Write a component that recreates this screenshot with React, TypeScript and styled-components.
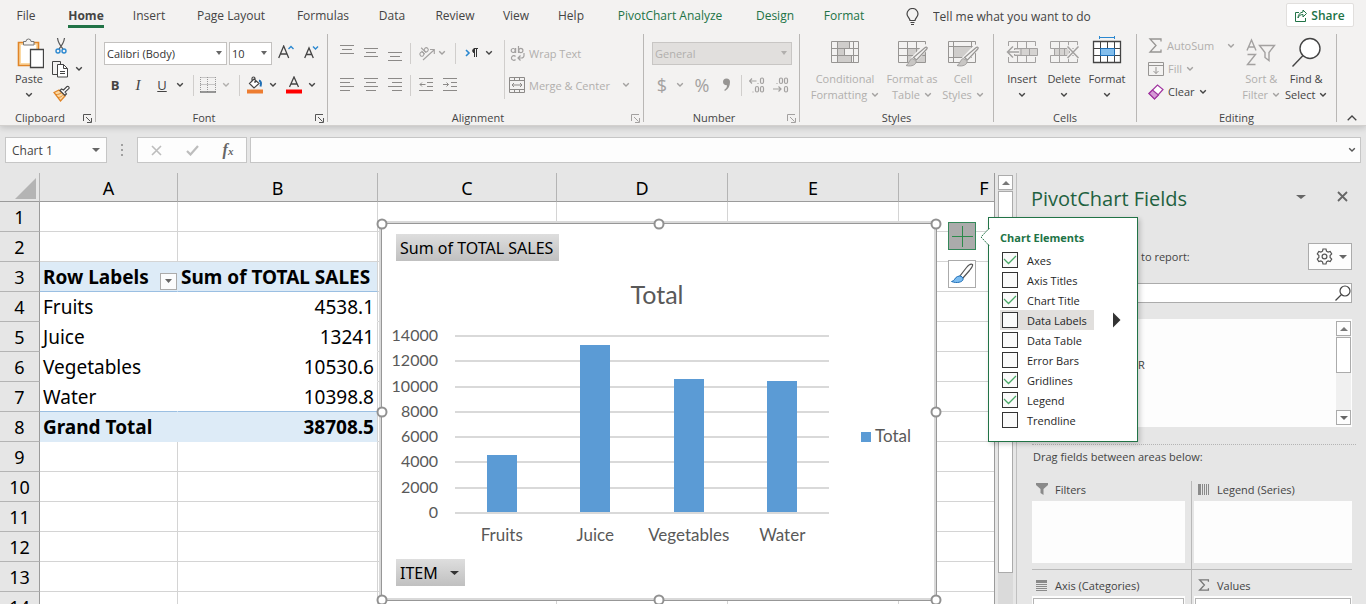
import React from 'react';
import styled, { createGlobalStyle, css } from 'styled-components';

const UI_FONT = '"Open Sans", "Noto Sans", sans-serif';
const CELL_FONT = '"Noto Sans", "Open Sans", sans-serif';
const CHART_FONT = 'Lato, "Open Sans", sans-serif';

const INK = '#444444';
const MUTED = '#b1afad';
const GREEN = '#217346';

const GlobalStyle = createGlobalStyle`
  *, *::before, *::after { box-sizing: border-box; }
  body { margin: 0; background: #e6e6e6; font-family: ${UI_FONT}; font-size: 11px; color: ${INK}; }
  button, input, select { font: inherit; color: inherit; margin: 0; padding: 0; border: 0; border-radius: 0; background: none; outline: 0; }
  button { cursor: pointer; white-space: nowrap; }
  svg { display: block; flex: none; }
`;

const Window = styled.div`
  display: flex;
  flex-direction: column;
  height: 100vh;
  overflow: hidden;
`;

/* ---------- Ribbon ---------- */

const Ribbon = styled.header`
  position: relative;
  z-index: 2;
  flex: none;
  background: #f3f2f1;
  border-bottom: 1px solid #d2d0ce;
  box-shadow: 0 2px 6px rgba(0, 0, 0, 0.16);
`;

const TabBar = styled.nav`
  display: flex;
  height: 34px;
`;

const Tab = styled.button<{ $w: number; $active?: boolean; $context?: boolean }>`
  display: flex;
  justify-content: center;
  width: ${p => p.$w}px;
  height: 32px;
  font-size: 12px;
  line-height: 32px;
  color: ${p => (p.$context ? GREEN : INK)};
  font-weight: ${p => (p.$active ? 700 : 400)};
  span {
    height: 28px;
    border-bottom: 3px solid ${p => (p.$active ? GREEN : 'transparent')};
  }
`;

const TellMe = styled.label`
  display: flex;
  flex: 1;
  align-items: center;
  gap: 14px;
  height: 32px;
  padding-left: 26px;
  input { flex: 1; font-size: 12px; }
  input::placeholder { color: ${INK}; opacity: 1; }
`;

const ShareButton = styled.button`
  display: flex;
  align-items: center;
  justify-content: center;
  gap: 4px;
  width: 68px;
  height: 24px;
  margin: 3px 12px 0 0;
  border: 1px solid #e1dfdd;
  border-radius: 2px;
  background: #fff;
  color: ${GREEN};
  font-size: 12px;
  font-weight: 600;
`;

const Groups = styled.div`
  display: flex;
  height: 91px;
`;

const Group = styled.section<{ $w: number }>`
  display: flex;
  flex-direction: column;
  width: ${p => p.$w}px;
`;

const GroupDivider = styled.span`
  width: 1px;
  height: 88px;
  background: #b9b7b5;
`;

const GroupBody = styled.div<{ $pad: number }>`
  display: flex;
  flex: 1;
  padding-left: ${p => p.$pad}px;
`;

const GroupFooter = styled.div`
  display: flex;
  height: 14px;
  line-height: 14px;
  text-align: center;
  span { flex: 1; }
  button { display: flex; align-items: center; justify-content: center; width: 15px; }
`;

const Stack = styled.div<{ $top?: number; $right?: number }>`
  display: flex;
  flex-direction: column;
  padding: ${p => p.$top ?? 3}px ${p => p.$right ?? 0}px 0 0;
`;

const ToolRow = styled.div<{ $h?: number; $gap?: number }>`
  display: flex;
  align-items: center;
  height: ${p => p.$h ?? 32}px;
  gap: ${p => p.$gap ?? 0}px;
`;

const Tool = styled.button<{ $w: number; $size?: number; $off?: boolean }>`
  display: flex;
  align-items: center;
  justify-content: center;
  width: ${p => p.$w}px;
  height: 24px;
  font-size: ${p => p.$size ?? 13}px;
  color: ${p => (p.$off ? '#a3a1a0' : INK)};
`;

const ItalicLetter = styled.i`
  font-family: 'Liberation Serif', serif;
  font-size: 15px;
`;

const ToolDivider = styled.span<{ $w: number; $h?: number; $top?: number }>`
  display: flex;
  flex: none;
  justify-content: center;
  width: ${p => p.$w}px;
  height: ${p => p.$h ?? 21}px;
  margin-top: ${p => p.$top ?? 0}px;
  &::before { content: ''; width: 1px; background: #d0cecc; }
`;

const TextTool = styled.button<{ $off?: boolean }>`
  display: flex;
  align-items: center;
  gap: 4px;
  height: 23px;
  color: ${p => (p.$off ? MUTED : INK)};
`;

const BigTool = styled.button<{ $w: number; $off?: boolean }>`
  display: flex;
  flex-direction: column;
  align-items: center;
  width: ${p => p.$w}px;
  height: 71px;
  padding-top: 3px;
  line-height: 16px;
  color: ${p => (p.$off ? MUTED : INK)};
`;

const LabelLine = styled.span`
  display: flex;
  align-items: center;
  gap: 4px;
  height: 16px;
`;

const Combo = styled.label<{ $w: number; $off?: boolean }>`
  display: flex;
  align-items: center;
  width: ${p => p.$w}px;
  height: 23px;
  padding: 0 4px 0 2px;
  border: 1px solid ${p => (p.$off ? '#c8c6c4' : '#c3c1bf')};
  background: ${p => (p.$off ? '#e1dfdd' : '#fff')};
  color: ${p => (p.$off ? MUTED : '#333')};
  select { flex: 1; min-width: 0; appearance: none; opacity: 1; }
`;

const CollapseButton = styled.button`
  align-self: flex-end;
  margin-left: auto;
  width: 28px;
  height: 14px;
  svg { margin: 0 auto; }
`;

/* ---------- Formula bar ---------- */

const FormulaBar = styled.div`
  display: flex;
  flex: none;
  align-items: center;
  height: 47px;
  padding: 1px 5px 0;
`;

const BarBox = styled.div<{ $w?: number }>`
  display: flex;
  align-items: center;
  flex: ${p => (p.$w ? 'none' : 1)};
  width: ${p => (p.$w ? p.$w + 'px' : 'auto')};
  height: 26px;
  border: 1px solid #c6c6c6;
  background: #fdfdfd;
  input { flex: 1; min-width: 0; padding-left: 6px; font-size: 12px; }
`;

const BarButton = styled.button<{ $w: number }>`
  display: flex;
  justify-content: center;
  align-items: center;
  width: ${p => p.$w}px;
  height: 24px;
`;

const Grip = styled.span`
  display: flex;
  justify-content: center;
  width: 30px;
`;

const Spacer = styled.span`
  width: 3px;
`;

const FxLabel = styled.i`
  font-family: 'Liberation Serif', serif;
  font-size: 16px;
  font-weight: 700;
  color: #666;
  small { font-size: 11px; }
`;

/* ---------- Worksheet ---------- */

const Workspace = styled.main`
  display: flex;
  flex: 1;
  min-height: 0;
  position: relative;
`;

const SheetArea = styled.div`
  flex: 1;
  min-width: 0;
  position: relative;
  overflow: hidden;
  border-right: 1px solid #9b9b9b;
`;

const Grid = styled.table`
  width: 1070px;
  table-layout: fixed;
  border-collapse: separate;
  border-spacing: 0;
  background: #fff;
  font-family: ${CELL_FONT};
  font-size: 19px;
  line-height: 28px;
  color: #000;
`;

const ColHead = styled.th`
  height: 29px;
  padding: 2px 0 0;
  border-right: 1px solid #b4b4b4;
  border-bottom: 1px solid #9b9b9b;
  background: #e6e6e6;
  font-size: 18px;
  font-weight: 400;
  line-height: 26px;
`;

const Corner = styled(ColHead)`
  padding: 3px 3px 0 0;
  svg { margin-left: auto; }
`;

const RowHead = styled.th`
  height: 30px;
  padding: 0;
  border-right: 1px solid #9b9b9b;
  border-bottom: 1px solid #b4b4b4;
  background: #e6e6e6;
  font-size: 18px;
  font-weight: 400;
`;

const Cell = styled.td<{ $kind?: 'head' | 'body' | 'last' | 'total'; $number?: boolean; $inner?: boolean }>`
  height: 30px;
  padding: 0 3px;
  border-right: 1px solid #d4d4d4;
  border-bottom: 1px solid #d4d4d4;
  text-align: ${p => (p.$number ? 'right' : 'left')};
  white-space: nowrap;
  ${p => p.$inner && css`border-right-color: transparent;`}
  ${p => p.$kind === 'body' && css`border-bottom-color: transparent;`}
  ${p => p.$kind === 'last' && css`border-bottom-color: #9bbfe2;`}
  ${p => (p.$kind === 'head' || p.$kind === 'total') && css`background: #ddebf7; font-weight: 700;`}
  ${p => p.$kind === 'head' && css`border-bottom-color: #9bbfe2;`}
  ${p => p.$kind === 'total' && css`border-bottom-color: #ddebf7;`}
`;

const HeadCell = styled.div`
  display: flex;
  align-items: center;
  justify-content: space-between;
  margin-right: -3px;
`;

const FilterButton = styled.button`
  display: flex;
  align-items: center;
  justify-content: center;
  width: 17px;
  height: 17px;
  margin-top: 9px;
  border: 1px solid #ababab;
  background: #fbfcfd;
`;

/* ---------- Chart object placed on the sheet ---------- */

const ChartFrame = styled.figure`
  position: absolute;
  left: 381px;
  top: 50px;
  width: 556px;
  height: 378px;
  margin: 0;
  padding: 10px 14px;
  border: 1px solid #979797;
  background: #fff;
  box-shadow: -2px -2px 0 #d9d9d9, inset -2px -2px 0 #d9d9d9;
`;

const PlotSvg = styled.svg`
  margin: 0 -14px;
  font-family: ${CHART_FONT};
  font-size: 16px;
  fill: #595959;
`;

const FieldButton = styled.button`
  display: flex;
  align-items: center;
  gap: 12px;
  height: 27px;
  padding: 0 6px 0 4px;
  background: linear-gradient(#dedede, #c0c0c0);
  font-family: ${CELL_FONT};
  font-size: 16px;
  color: #000;
`;

const Handle = styled.span<{ $x: string; $y: string }>`
  position: absolute;
  left: ${p => p.$x};
  top: ${p => p.$y};
  width: 11px;
  height: 11px;
  transform: translate(-50%, -50%);
  border: 2px solid #919191;
  border-radius: 50%;
  background: #fff;
`;

const ChartTools = styled.div`
  position: absolute;
  left: 948px;
  top: 49px;
  display: flex;
  flex-direction: column;
  gap: 10px;
`;

const ChartToolButton = styled.button<{ $on?: boolean }>`
  display: flex;
  align-items: center;
  justify-content: center;
  width: 28px;
  height: 28px;
  border: 1px solid ${p => (p.$on ? '#35885a' : '#ababab')};
  background: ${p => (p.$on ? '#ababab' : '#fff')};
`;

const Flyout = styled.fieldset`
  position: absolute;
  z-index: 3;
  left: 988px;
  top: 44px;
  width: 150px;
  margin: 0;
  padding: 10px 0 11px 11px;
  border: 1px solid ${GREEN};
  background: #fff;
  box-shadow: 2px 2px 5px rgba(0, 0, 0, 0.2);
  color: #262626;
`;

const FlyoutTitle = styled.h2`
  margin: 0 0 2px;
  font-size: 11px;
  line-height: 20px;
  font-weight: 700;
  color: ${GREEN};
`;

const Notch = styled.svg`
  position: absolute;
  left: -9px;
  top: 9px;
`;

const OptionRow = styled.div`
  display: flex;
  align-items: center;
  justify-content: space-between;
  height: 20px;
  padding-right: 16px;
`;

const Option = styled.label<{ $hot?: boolean }>`
  display: flex;
  align-items: center;
  gap: 9px;
  height: 20px;
  padding: 0 7px 0 2px;
  background: ${p => (p.$hot ? '#e1dfdd' : 'transparent')};
`;

const Box = styled.span`
  display: grid;
  place-items: center;
  width: 16px;
  height: 16px;
  > * { grid-area: 1 / 1; }
  input {
    appearance: none;
    width: 16px;
    height: 16px;
    border: 1px solid #333;
    background: #fafafa;
  }
  svg { z-index: 1; pointer-events: none; visibility: hidden; }
  input:checked + svg { visibility: visible; }
`;

/* ---------- Scroll bars ---------- */

const ScrollRail = styled.div<{ $sheet?: boolean }>`
  display: flex;
  flex: none;
  flex-direction: column;
  width: 15px;
  margin: ${p => (p.$sheet ? '2px 3px 0' : '0')};
  background: ${p => (p.$sheet ? '#dadada' : '#f0f0f0')};
`;

const ScrollArrow = styled.button`
  display: flex;
  align-items: center;
  justify-content: center;
  height: 15px;
  border: 1px solid #ababab;
  background: #fdfdfd;
`;

const ScrollThumb = styled.span<{ $h: number }>`
  height: ${p => p.$h}px;
  margin-top: 1px;
  border: 1px solid #ababab;
  background: #fff;
`;

const ScrollGap = styled.span`
  flex: 1;
`;

/* ---------- Task pane ---------- */

const Pane = styled.aside`
  flex: none;
  width: 350px;
  border-left: 1px solid #c0c0c0;
  padding: 0 14px 0 15px;
`;

const PaneHead = styled.div`
  display: flex;
  align-items: center;
  height: 52px;
  h1 { flex: 1; margin: 0 0 0 -1px; font-size: 20px; font-weight: 400; line-height: 28px; color: #1e6140; }
`;

const PaneIcon = styled.button<{ $w: number }>`
  display: flex;
  justify-content: center;
  align-items: center;
  width: ${p => p.$w}px;
  height: 18px;
  margin-bottom: 5px;
`;

const PaneRow = styled.div`
  display: flex;
  align-items: center;
  justify-content: space-between;
  height: 27px;
  margin-top: 18px;
  padding-left: 109px;
`;

const GearButton = styled.button`
  display: flex;
  align-items: center;
  justify-content: center;
  gap: 6px;
  width: 44px;
  height: 27px;
  padding-left: 3px;
  border: 1px solid #ababab;
  background: #fdfdfd;
`;

const SearchBox = styled.label`
  display: flex;
  align-items: center;
  height: 20px;
  margin-top: 13px;
  border: 1px solid #ababab;
  background: #fff;
  input { flex: 1; min-width: 0; }
`;

const FieldList = styled.div`
  display: flex;
  height: 108px;
  margin-top: 16px;
  padding: 2px 1px 2px 0;
  background: #fdfdfd;
  ul { flex: 1; margin: 0; padding: 33px 0 0 106px; list-style: none; line-height: 22px; }
`;

const DragHint = styled.p`
  margin: 17px -4px 0 0;
  padding: 1px 0 0 1px;
  border-top: 1px dotted #b4b4b4;
  line-height: 22px;
`;

const Areas = styled.div`
  display: grid;
  grid-template-columns: 1fr 160px;
  margin-top: 13px;
`;

const Area = styled.section<{ $left?: boolean; $top?: boolean }>`
  padding-right: ${p => (p.$left ? 6 : 0)}px;
  padding-left: ${p => (p.$left ? 0 : 2)}px;
  padding-bottom: 6px;
  border-right: ${p => (p.$left ? '1px solid #b9b9b9' : '0')};
  border-bottom: ${p => (p.$top ? '1px solid #b9b9b9' : '0')};
  h3 {
    display: flex;
    align-items: center;
    gap: 7px;
    height: ${p => (p.$top ? 20 : 26)}px;
    margin: 0;
    padding: 0 0 ${p => (p.$top ? 4 : 0)}px 4px;
    ${p => !p.$top && css`padding-top: 4px;`}
    font-size: 11px;
    font-weight: 400;
  }
`;

const DropZone = styled.div`
  height: 62px;
  padding: 2px 1px;
  background: #fdfdfd;
`;

const FieldPill = styled.button`
  display: block;
  width: 100%;
  height: 20px;
  padding: 0 6px;
  border: 1px solid #b4b4b4;
  background: #fff;
  text-align: left;
`;

/* ---------- Icons ---------- */

const Chevron = ({ c = INK }: { c?: string }) => (
  <svg width="8" height="6" viewBox="0 0 8 6" fill="none" stroke={c} strokeWidth="1.4"><path d="M1.2 1.2 4 4l2.8-2.8" /></svg>
);
const Triangle = ({ c = '#666', w = 7 }: { c?: string; w?: number }) => (
  <svg width={w} height="4" viewBox="0 0 8 4" preserveAspectRatio="none" fill={c}><path d="M0 0h8L4 4z" /></svg>
);
const TriangleUp = () => <svg width="8" height="4" viewBox="0 0 8 4" fill="#777"><path d="M0 4h8L4 0z" /></svg>;

const PasteIcon = () => (
  <svg width="30" height="34" viewBox="0 0 30 34" fill="none">
    <path d="M4.500 5.500h20v23h-20z" fill="#fbd9a4" stroke="#e08528" strokeWidth="1.600" />
    <path d="M7 8h15v18H7z" fill="#fff" />
    <path d="M9.500 8V4.500h2.500a2.500 2.500 0 0 1 5 0h3V8z" fill="#f3f2f1" stroke="#777" />
    <path d="M16.500 12.500h13v18h-13z" fill="#fff" stroke="#444" strokeWidth="1.300" />
  </svg>
);
const CutIcon = () => (
  <svg width="16" height="18" viewBox="0 0 16 18" fill="none" stroke="#555" strokeWidth="1.200">
    <path d="M4.500 1c.5 4 3 8 5.500 11M11.500 1c-.5 4-3 8-5.500 11" />
    <g stroke="#2b88d0" strokeWidth="1.400"><circle cx="5" cy="14" r="2" /><circle cx="11" cy="14" r="2" /></g>
  </svg>
);
const CopyIcon = () => (
  <svg width="17" height="17" viewBox="0 0 17 17" stroke="#444" fill="#fff">
    <path d="M6 13.500H.5V.500h8V4" fill="none" /><path d="M5.500 3.500h6l4 4v8.500h-10z" /><path d="M11.500 3.500v4h4M8 10.500h5M8 12.500h5" fill="none" />
  </svg>
);
const PainterIcon = () => (
  <svg width="17" height="17" viewBox="0 0 17 17" fill="none">
    <path d="M1 7.500 6 5l6 6-4.500 5z" fill="#fbd9a4" stroke="#e08528" strokeWidth="1.300" />
    <path d="M3 9.500c2 0 4-.5 5-1.500M5 12.500c2 0 3.500-1 4.500-2" stroke="#e08528" />
    <path d="m7 5.500 5 5 1.500-1.500-1.500-2 4-3.500a1.500 1.500 0 0 0-2-2L10.500 5 8.500 4z" fill="#fff" stroke="#444" strokeWidth="1.100" />
  </svg>
);
const Launcher = ({ c = '#777' }: { c?: string }) => (
  <svg width="9" height="9" viewBox="0 0 9 9" fill="none" stroke={c}><path d="M.5 7V.500H8M3 3l4.500 4.500M8.500 4v4.500H4" /></svg>
);
const BordersIcon = () => (
  <svg width="16" height="16" viewBox="0 0 16 16" fill="none" stroke="#9a9a9a" strokeDasharray="1 1"><path d="M.5.500h15M.5 7.500h15M.5 0v15M7.500 0v15M15.500 0v15" /><path d="M0 15h16" stroke="#777" strokeWidth="1.500" strokeDasharray="none" /></svg>
);
const BucketIcon = () => (
  <svg width="16" height="18" viewBox="0 0 16 18" fill="none">
    <path d="m7 3 5 4.500-5 4.500-4.500-4.500zM5 5V2.500a1.500 1.500 0 0 1 3 0V7" stroke="#444" strokeWidth="1.200" fill="#fff" />
    <path d="M12 4.500c2 .5 2.500 3 1.500 6" stroke="#1f6fb5" strokeWidth="2" />
    <path d="M0 13.500h16v4H0z" fill="#ed7d31" />
  </svg>
);
const FontColorIcon = () => (
  <svg width="16" height="18" viewBox="0 0 16 18" fill="none"><path d="M3.500 11 8 1l4.500 10M5 8h6" stroke="#444" strokeWidth="1.300" /><path d="M0 13.500h16v4H0z" fill="#f00" /></svg>
);
const FontSizeIcon = ({ up }: { up?: boolean }) => (
  <svg width="17" height="16" viewBox="0 0 17 16" fill="none">
    <path d={up ? 'M.7 13 5.700 1l5 12M2.300 9h6.800' : 'M1.700 13 6 3l4.300 10M3 9.500h6'} stroke="#444" strokeWidth="1.300" />
    <path d={up ? 'm10.500 4 2.500-2.500L15.500 4' : 'm10 1.500 2.500 2.500L15 1.500'} stroke="#2b88d0" strokeWidth="1.400" />
  </svg>
);
const Lines = ({ rows }: { rows: number[][] }) => (
  <svg width="14" height="18" viewBox="0 0 14 18" stroke="#8c8a88">{rows.map(([x, y, w]) => <path key={y} d={`M${x} ${y}.500h${w}`} />)}</svg>
);
const OrientIcon = () => (
  <svg width="17" height="17" viewBox="0 0 17 17" fill="none" stroke="#a3a1a0" strokeWidth="1.100">
    <path d="M5 15 16 5M12 4.500h4.300V9" />
    <g transform="rotate(-45 6 7)"><circle cx="3" cy="7" r="2" /><path d="M5 4.500V9M7 2v7" /><circle cx="9.200" cy="7" r="2" /></g>
  </svg>
);
const PilcrowIcon = () => (
  <svg width="14" height="12" viewBox="0 0 14 12" fill="none"><path d="m1 3 3 3-3 3" stroke="#2b88d0" strokeWidth="1.600" /><path d="M9 1.500h4M9.500 2v8M11.500 2v8" stroke="#333" /><path d="M9.500 1.500a2.300 2.300 0 0 0 0 4.500z" fill="#333" stroke="#333" /></svg>
);
const IndentIcon = ({ out }: { out?: boolean }) => (
  <svg width="14" height="14" viewBox="0 0 14 14" fill="none" stroke="#8c8a88"><path d="M0 .500h14M8 4.500h6M8 8.500h6M0 12.500h14" /><path d={out ? 'M6.500 6.500H1M3 4.500l-2 2 2 2' : 'M0 6.500h5.500M3.500 4.500l2 2-2 2'} /></svg>
);
const WrapIcon = () => (
  <svg width="16" height="17" viewBox="0 0 16 17" fill="none" stroke="#a3a1a0" strokeWidth="1.200">
    <circle cx="4.200" cy="5.500" r="2" /><path d="M6.600 3v5M9.500 1v7" /><circle cx="11.800" cy="5.500" r="2.100" />
    <path d="M6.500 11.500a2.300 2.300 0 1 0 0 3M15 8v2.500a2.500 2.500 0 0 1-2.500 2.500H9M11.500 10.500 9 13l2.500 2.500" />
  </svg>
);
const MergeIcon = () => (
  <svg width="16" height="16" viewBox="0 0 16 16" fill="none" stroke="#8c8a88"><path d="M.5.500h15v15H.5zM.5 3.500h15M.5 12.500h15M5.500.500v3M10.500.500v3M5.500 12.500v3M10.500 12.500v3M3 8h10M5 6 3 8l2 2M11 6l2 2-2 2" /></svg>
);
const DecimalIcon = ({ less }: { less?: boolean }) => (
  <svg width="16" height="18" viewBox="0 0 16 18" fill="none" stroke="#a3a1a0" strokeWidth="1.200">
    {less ? <path d="M0 13h8M5.500 10.500 8 13l-2.500 2.500" /> : <path d="M7.500 5H.7M3 2.500.5 5 3 7.500" />}
    {!less && <path d="M8.500 7.500h1" />}{less && <rect x="6.500" y="2" width="3" height="5.500" rx="1.500" />}
    <rect x="11.500" y="2" width="3" height="5.500" rx="1.500" /><rect x="11.500" y="10.500" width="3" height="5.500" rx="1.500" />
    {!less && <rect x="6.500" y="10.500" width="3" height="5.500" rx="1.500" />}<path d={less ? 'M3.500 7.500h1' : 'M3.500 16h1'} />
  </svg>
);
const BrushOver = () => (
  <g><path d="m31.500 11-11 11.500-2-1.500 10-10.500c2-1.800 4-1.500 3 .5z" fill="#f3f2f1" stroke="#f3f2f1" strokeWidth="4" /><path d="m31.800 12-10.300 11-3-2.500L29 11.500c2.500-2 4-1.500 2.800.5z" fill="#f3f2f1" stroke="#979593" strokeWidth="1.200" /><path d="M21 23.500c1 4-4 6.500-10 5 3-1 2.500-5 6-7z" fill="#c8c6c4" stroke="#a3a1a0" /></g>
);
const CondIcon = () => (
  <svg width="32" height="34" viewBox="0 0 32 34" fill="none" stroke="#979593"><path d="M8.500 4.500h12v7h-12zM8.500 11.500h7v7h-7zM8.500 18.500h14v7h-14z" fill="#cfcdcb" /><path d="M2.500 4.500h27v21h-27zM8.500 4.500v21M24.500 4.500v21M2.500 11.500h27M2.500 18.500h27" /></svg>
);
const TableIcon = () => (
  <svg width="34" height="34" viewBox="0 0 34 34" fill="none" stroke="#979593"><path d="M12.500 11.500h9v14h-9zM21.500 11.500h9v14h-9z" fill="#cfcdcb" stroke="none" /><path d="M3.500 4.500h27v21h-27zM12.500 4.500v21M21.500 4.500v21M3.500 11.500h27M3.500 18.500h27" /><BrushOver /></svg>
);
const CellStyleIcon = () => (
  <svg width="34" height="34" viewBox="0 0 34 34" fill="none" stroke="#979593"><path d="M7.500 9.500h18v11h-18z" fill="#cfcdcb" /><path d="M2.500 4.500h27v21h-27zM7.500 4.500v21M25.500 4.500v16M2.500 9.500h27M2.500 20.500h23" /><BrushOver /></svg>
);
const InsertIcon = () => (
  <svg width="34" height="34" viewBox="0 0 34 34" fill="none" stroke="#a3a1a0"><path d="M3.500 9V4.500h27V9M12.500 4.500V12M21.500 4.500V12M3.500 20v5.500h27V20M12.500 19v6.500M21.500 19v6.500" /><path d="M9.500 11.500h23v7h-23zM16 11.500v7M24.500 11.500v7" fill="#d5d3d1" /><path d="M2.500 15h12" stroke="#f3f2f1" strokeWidth="4" /><path d="M14 15H2.500M8 9.500 2.500 15 8 20.500" strokeWidth="1.500" /></svg>
);
const DeleteIcon = () => (
  <svg width="34" height="34" viewBox="0 0 34 34" fill="none" stroke="#a3a1a0"><path d="M3.500 4.500h27V9M3.500 4.500v7h27M12.500 4.500v7M21.500 4.500v7M3.500 18.500h27v7h-27zM12.500 18.500v7M21.500 18.500v7" /><path d="M7.500 11.500h15v7h-15zM12.500 11.500v7M17.500 11.500v7" fill="#d5d3d1" /><path d="m20.500 9 11 12M31.500 9l-11 12" stroke="#f3f2f1" strokeWidth="4" /><path d="m20.500 9.500 11 11.500M31.500 9.500 20.500 21" strokeWidth="1.500" /></svg>
);
const FormatIcon = () => (
  <svg width="34" height="34" viewBox="0 0 34 34" overflow="visible" fill="none" stroke="#444"><path d="M3.500 4.500h27v21h-27z" fill="#fff" strokeWidth="1.300" /><path d="M10.500 4.500v21M24.500 4.500v21M17.500 4.500v21M3.500 11.500h27M3.500 18.500h27" /><path d="M10.500 11.500h14v7h-14z" fill="#83beec" stroke="#1e6fb8" /><path d="M9.500-1v3M24.500-1v3M9.500.500h15" stroke="#2b88d0" /></svg>
);
const SigmaIcon = ({ s = 15, c = '#979593', w = 1.3 }: { s?: number; c?: string; w?: number }) => (
  <svg width={s} height={s} viewBox="0 0 15 15" fill="none" stroke={c} strokeWidth={w}><path d="M13 3.500V1H2l6 6.500L2 14h11v-2.500" /></svg>
);
const FillIcon = () => (
  <svg width="16" height="14" viewBox="0 0 16 14" fill="none" stroke="#979593"><path d="M.5.500h15v13H.5zM.5 3.500h15M8 5v6.500M5.500 9 8 11.500 10.500 9" /></svg>
);
const EraserIcon = () => (
  <svg width="16" height="16" viewBox="0 0 16 16" fill="none" stroke="#a035a0" strokeWidth="1.200"><path d="m1 9.500 8.500-8.500 5.500 4.500L6.500 15z" fill="#fff" /><path d="M1 9.500 4.500 6l6 5-4 4z" fill="#d59ad5" /></svg>
);
const SortIcon = () => (
  <svg width="32" height="34" viewBox="0 0 32 34" fill="none" stroke="#a3a1a0" strokeWidth="1.400"><path d="M2 13.500 6.500 3 11 13.500M3.500 10h6M2.500 17.500h8L2.500 27.500h8" /><path d="M14.500 8.500h15l-5.500 7v8l-4-3v-5z" /></svg>
);
const FindIcon = () => (
  <svg width="32" height="34" viewBox="0 0 32 34" fill="none" stroke="#444" strokeWidth="1.400"><circle cx="20" cy="11.500" r="10" fill="#fff" /><path d="M13 18.500 2.500 29.500" /></svg>
);
const BulbIcon = () => (
  <svg width="13" height="17" viewBox="0 0 13 17" fill="none" stroke="#444" strokeWidth="1.200"><path d="M4 12.500c0-2.500-3-3.500-3-6.500a5.400 5.400 0 0 1 11 0c0 3-3 4-3 6.500zM4.500 14.500h4M5 16.500h3" /></svg>
);
const ShareIcon = () => (
  <svg width="12" height="13" viewBox="0 0 12 13" fill="none" stroke={GREEN}><path d="M4 3.500H.500v9h10V9M8 1l3.500 3.500L8 8V5.500C5.500 5.500 4 6.500 3 9c0-3.500 2-5.500 5-6z" /></svg>
);
const GearIcon = () => (
  <svg width="17" height="17" viewBox="0 0 17 17" fill="none" stroke="#555" strokeWidth="1.200"><circle cx="8.500" cy="8.500" r="2.400" /><path d="M7 1h3l.5 2.200 1.600.9 2.100-.7 1.500 2.600-1.600 1.500v2l1.600 1.500-1.500 2.600-2.100-.7-1.600.9L10 16H7l-.5-2.200-1.600-.9-2.100.7L1.300 11l1.600-1.500v-2L1.300 6l1.500-2.600 2.100.7 1.600-.9z" /></svg>
);
const SearchIcon = () => (
  <svg width="16" height="16" viewBox="0 0 16 16" fill="none" stroke="#444" strokeWidth="1.200"><circle cx="10" cy="6" r="5" /><path d="M6.500 9.500.5 15.500" /></svg>
);
const ChartBrushIcon = () => (
  <svg width="24" height="22" viewBox="0 0 24 22"><path d="M22.500 1.500c-1.500-1-4 .5-6 3L10 13l2.500 2.500 7-8c2-2.500 3.500-5 3-6z" fill="#fff" stroke="#555" strokeWidth="1.200" /><path d="M13 15.500c1 3-5.500 5.500-11.500 3 3.500-.5 3-4 6-5s4.500-.5 5.500 2z" fill="#7cbcf0" stroke="#1e6fb8" /></svg>
);
const FunnelIcon = () => <svg width="12" height="12" viewBox="0 0 12 12" fill="#8a8a8a"><path d="M0 0h12v2L7.500 6v6l-3-2V6L0 2z" /></svg>;
const ColsIcon = () => <svg width="12" height="11" viewBox="0 0 12 11" fill="#8a8a8a"><path d="M0 0h3v11H0zM4 0h1v11H4zM6 0h1v11H6zM8 0h1v11H8zM10 0h1v11h-1z" /></svg>;
const RowsIcon = () => <svg width="12" height="11" viewBox="0 0 12 11" fill="#8a8a8a"><path d="M0 0h11v3H0zM0 4h11v1H0zM0 6h11v1H0zM0 8h11v1H0zM0 10h11v1H0z" /></svg>;

/* ---------- Data ---------- */

const TABS = [
  { name: 'File', w: 52 }, { name: 'Home', w: 68 }, { name: 'Insert', w: 58 }, { name: 'Page Layout', w: 106 },
  { name: 'Formulas', w: 78 }, { name: 'Data', w: 60 }, { name: 'Review', w: 66 }, { name: 'View', w: 56 },
  { name: 'Help', w: 54 }, { name: 'PivotChart Analyze', w: 144 }, { name: 'Design', w: 66 }, { name: 'Format', w: 72 },
];
const CONTEXT_TABS = ['PivotChart Analyze', 'Design', 'Format'];

const COLUMNS = [['A', 138], ['B', 200], ['C', 179], ['D', 171], ['E', 171], ['F', 171]] as const;

const SALES = [
  { item: 'Fruits', total: 4538.1 },
  { item: 'Juice', total: 13241 },
  { item: 'Vegetables', total: 10530.6 },
  { item: 'Water', total: 10398.8 },
];
const GRAND_TOTAL = 38708.5;

const ELEMENTS = [
  ['Axes', true], ['Axis Titles', false], ['Chart Title', true], ['Data Labels', false], ['Data Table', false],
  ['Error Bars', false], ['Gridlines', true], ['Legend', true], ['Trendline', false],
] as const;

/* ---------- Parts ---------- */

function RibbonGroup({ name, w, pad, launcher, children }: { name: string; w: number; pad: number; launcher?: string; children: React.ReactNode }) {
  return (
    <>
      <Group $w={w}>
        <GroupBody $pad={pad}>{children}</GroupBody>
        <GroupFooter>
          <span>{name}</span>
          {launcher && <button aria-label={name + ' settings'}><Launcher c={launcher} /></button>}
        </GroupFooter>
      </Group>
      <GroupDivider />
    </>
  );
}

function Big({ w, off, icon, lines }: { w: number; off?: boolean; icon: React.ReactNode; lines: string[] }) {
  const c = off ? '#a3a1a0' : INK;
  return (
    <BigTool $w={w} $off={off}>
      {icon}
      <LabelLine>{lines[0]}</LabelLine>
      <LabelLine>{lines[1]}<Chevron c={c} /></LabelLine>
    </BigTool>
  );
}

function RibbonGroups() {
  return (
    <Groups>
      <RibbonGroup name="Clipboard" w={95} pad={13} launcher="#555">
        <Big w={32} icon={<PasteIcon />} lines={['Paste', '']} />
        <Stack $top={1}>
          <ToolRow $h={22}><Tool $w={32} aria-label="Cut"><CutIcon /></Tool></ToolRow>
          <ToolRow $h={24}><Tool $w={30} aria-label="Copy"><CopyIcon /></Tool><Chevron /></ToolRow>
          <ToolRow $h={24}><Tool $w={32} aria-label="Format Painter"><PainterIcon /></Tool></ToolRow>
        </Stack>
      </RibbonGroup>

      <RibbonGroup name="Font" w={231} pad={8} launcher="#555">
        <Stack>
          <ToolRow $gap={2}>
            <Combo $w={123}><select aria-label="Font"><option>Calibri (Body)</option></select><Triangle w={6} /></Combo>
            <Combo $w={43}><select aria-label="Font size"><option>10</option></select><Triangle w={6} /></Combo>
            <Tool $w={24} aria-label="Increase font size"><FontSizeIcon up /></Tool>
            <Tool $w={22} aria-label="Decrease font size"><FontSizeIcon /></Tool>
          </ToolRow>
          <ToolRow>
            <Tool $w={22}><b>B</b></Tool>
            <Tool $w={24}><ItalicLetter>I</ItalicLetter></Tool>
            <Tool $w={24}><u>U</u></Tool>
            <Tool $w={12} aria-label="Underline style"><Chevron /></Tool>
            <ToolDivider $w={14} />
            <Tool $w={16} aria-label="Borders"><BordersIcon /></Tool>
            <Tool $w={20} aria-label="More borders"><Chevron c="#b1afad" /></Tool>
            <ToolDivider $w={6} />
            <Tool $w={25} aria-label="Fill color"><BucketIcon /></Tool>
            <Tool $w={12} aria-label="More fill colors"><Chevron /></Tool>
            <Tool $w={29} aria-label="Font color"><FontColorIcon /></Tool>
            <Tool $w={8} aria-label="More font colors"><Chevron /></Tool>
          </ToolRow>
        </Stack>
      </RibbonGroup>

      <RibbonGroup name="Alignment" w={315} pad={7} launcher="#a3a1a0">
        <Stack>
          <ToolRow>
            <Tool $w={24} aria-label="Top align"><Lines rows={[[0, 1, 14], [2, 5, 10], [0, 9, 14]]} /></Tool>
            <Tool $w={24} aria-label="Middle align"><Lines rows={[[0, 4, 14], [2, 8, 10], [0, 12, 14]]} /></Tool>
            <Tool $w={24} aria-label="Bottom align"><Lines rows={[[0, 8, 14], [2, 12, 10], [0, 16, 14]]} /></Tool>
            <ToolDivider $w={6} />
            <Tool $w={26} aria-label="Orientation"><OrientIcon /></Tool>
            <Tool $w={6} aria-label="More orientations"><Chevron c="#a3a1a0" /></Tool>
            <ToolDivider $w={20} />
            <Tool $w={14} aria-label="Text direction"><PilcrowIcon /></Tool>
            <Tool $w={20} aria-label="More directions"><Chevron /></Tool>
          </ToolRow>
          <ToolRow>
            <Tool $w={24} aria-label="Align left"><Lines rows={[[0, 2, 14], [0, 6, 10], [0, 10, 14], [0, 14, 10]]} /></Tool>
            <Tool $w={24} aria-label="Center"><Lines rows={[[0, 2, 14], [2, 6, 10], [0, 10, 14], [2, 14, 10]]} /></Tool>
            <Tool $w={24} aria-label="Align right"><Lines rows={[[0, 2, 14], [4, 6, 10], [0, 10, 14], [4, 14, 10]]} /></Tool>
            <ToolDivider $w={6} />
            <Tool $w={26} aria-label="Decrease indent"><IndentIcon out /></Tool>
            <Tool $w={22} aria-label="Increase indent"><IndentIcon /></Tool>
          </ToolRow>
        </Stack>
        <ToolDivider $w={10} $h={59} $top={6} />
        <Stack>
          <ToolRow><TextTool $off><WrapIcon />Wrap Text</TextTool></ToolRow>
          <ToolRow $gap={12}><TextTool $off><MergeIcon />Merge &amp; Center</TextTool><Chevron c="#a3a1a0" /></ToolRow>
        </Stack>
      </RibbonGroup>

      <RibbonGroup name="Number" w={155} pad={8} launcher="#a3a1a0">
        <Stack>
          <ToolRow>
            <Combo $w={140} $off><select aria-label="Number format" disabled><option>General</option></select><Triangle w={6} c="#b1afad" /></Combo>
          </ToolRow>
          <ToolRow>
            <Tool $w={20} $size={18} $off>$</Tool>
            <Tool $w={16} $off aria-label="More currencies"><Chevron c="#a3a1a0" /></Tool>
            <Tool $w={28} $size={18} $off>%</Tool>
            <Tool $w={20} $off aria-label="Comma style">
              <svg width="9" height="14" viewBox="0 0 9 14" fill="#979593"><path d="M1 4a3.500 3.500 0 1 1 7 0c0 4-1.500 7-5 9l-.8-1C4.500 10.500 5 9 5 7.300A3.500 3.500 0 0 1 1 4z" /></svg>
            </Tool>
            <ToolDivider $w={10} />
            <Tool $w={22} aria-label="Increase decimal"><DecimalIcon /></Tool>
            <Tool $w={26} aria-label="Decrease decimal"><DecimalIcon less /></Tool>
          </ToolRow>
        </Stack>
      </RibbonGroup>

      <RibbonGroup name="Styles" w={193} pad={4}>
        <Big w={82} off icon={<CondIcon />} lines={['Conditional', 'Formatting']} />
        <Big w={52} off icon={<TableIcon />} lines={['Format as', 'Table']} />
        <Big w={50} off icon={<CellStyleIcon />} lines={['Cell', 'Styles']} />
      </RibbonGroup>

      <RibbonGroup name="Cells" w={142} pad={7}>
        <Big w={42} icon={<InsertIcon />} lines={['Insert', '']} />
        <Big w={42} icon={<DeleteIcon />} lines={['Delete', '']} />
        <Big w={44} icon={<FormatIcon />} lines={['Format', '']} />
      </RibbonGroup>

      <RibbonGroup name="Editing" w={199} pad={11}>
        <Stack $top={0} $right={4}>
          <ToolRow $h={23} $gap={13}><TextTool $off><SigmaIcon />AutoSum</TextTool><Chevron c="#a3a1a0" /></ToolRow>
          <ToolRow $h={23}><TextTool $off><FillIcon />Fill<Chevron c="#a3a1a0" /></TextTool></ToolRow>
          <ToolRow $h={23}><TextTool><EraserIcon />Clear<Chevron /></TextTool></ToolRow>
        </Stack>
        <Big w={44} off icon={<SortIcon />} lines={['Sort &', 'Filter']} />
        <Big w={46} icon={<FindIcon />} lines={['Find &', 'Select']} />
      </RibbonGroup>
      <CollapseButton aria-label="Collapse the ribbon">
        <svg width="10" height="6" viewBox="0 0 10 6" fill="none" stroke="#444" strokeWidth="1.300"><path d="m.7 5.300 4.300-4.300 4.300 4.300" /></svg>
      </CollapseButton>
    </Groups>
  );
}

function Chart() {
  const left = 73, right = 447, base = 252, top = 75, max = 14000;
  const y = (v: number) => Math.round(base - (v / max) * (base - top));
  const band = (right - left) / SALES.length;
  return (
    <ChartFrame>
      <FieldButton>Sum of TOTAL SALES</FieldButton>
      <PlotSvg width="554" height="298" viewBox="0 0 554 298" role="img" aria-label="Total">
        <text x="275" y="43" textAnchor="middle" fontSize="25">Total</text>
        {[0, 2, 4, 6, 8, 10, 12, 14].map(k => (
          <g key={k}>
            <rect x={left} y={y(k * 1000) - 1} width={right - left} height="2" fill="#d9d9d9" />
            <text x="56" y={y(k * 1000) + 5} textAnchor="end">{k * 1000}</text>
          </g>
        ))}
        {SALES.map((s, i) => (
          <g key={s.item}>
            <rect x={Math.round(left + band * (i + 0.5)) - 15} y={y(s.total) - 1} width="30" height={base - y(s.total)} fill="#5b9bd5" />
            <text x={left + band * (i + 0.5)} y="280" textAnchor="middle" fontSize="17">{s.item}</text>
          </g>
        ))}
        <rect x="479" y="171" width="10" height="10" fill="#5b9bd5" />
        <text x="493" y="181" fontSize="17">Total</text>
      </PlotSvg>
      <FieldButton>ITEM<Triangle c="#333" w={9} /></FieldButton>
      {['0%', '50%', '100%'].map(fx => ['0%', '50%', '100%'].map(fy => (
        fx === '50%' && fy === '50%' ? null : <Handle key={fx + fy} $x={fx} $y={fy} />
      )))}
    </ChartFrame>
  );
}

function Sheet() {
  const labels = ['', '', 'Row Labels', ...SALES.map(s => s.item), 'Grand Total'];
  const values = ['', '', 'Sum of TOTAL SALES', ...SALES.map(s => String(s.total)), String(GRAND_TOTAL)];
  const kindOf = (r: number) => (r === 3 ? 'head' : r === 8 ? 'total' : r === 7 ? 'last' : r > 3 && r < 8 ? 'body' : undefined);
  return (
    <Grid>
      <colgroup>
        <col style={{ width: 40 }} />
        {COLUMNS.map(([n, w]) => <col key={n} style={{ width: w }} />)}
      </colgroup>
      <thead>
        <tr>
          <Corner><svg width="21" height="21" viewBox="0 0 21 21" fill="#b4b4b4"><path d="M21 0v21H0z" /></svg></Corner>
          {COLUMNS.map(([n]) => <ColHead key={n}>{n}</ColHead>)}
        </tr>
      </thead>
      <tbody>
        {Array.from({ length: 14 }, (_, i) => i + 1).map(r => (
          <tr key={r}>
            <RowHead>{r}</RowHead>
            <Cell $kind={kindOf(r)} $inner={r > 2 && r < 9}>
              {r === 3 ? (
                <HeadCell>{labels[2]}<FilterButton aria-label="Filter row labels"><Triangle w={7} /></FilterButton></HeadCell>
              ) : labels[r - 1]}
            </Cell>
            <Cell $kind={kindOf(r)} $number={r > 3}>{values[r - 1]}</Cell>
            <Cell /><Cell /><Cell /><Cell />
          </tr>
        ))}
      </tbody>
    </Grid>
  );
}

function ElementsFlyout() {
  return (
    <Flyout>
      <Notch width="10" height="20" viewBox="0 0 10 20" fill="#fff"><path d="M10 1 1 10l9 9z" /><path d="M9.500 1 1 10l8.500 9" fill="none" stroke={GREEN} strokeDasharray="2 1" /></Notch>
      <FlyoutTitle>Chart Elements</FlyoutTitle>
      {ELEMENTS.map(([name, on]) => (
        <OptionRow key={name}>
          <Option $hot={name === 'Data Labels'}>
            <Box>
              <input type="checkbox" defaultChecked={on} />
              <svg width="14" height="10" viewBox="0 0 14 10" fill="none" stroke="#4ba868" strokeWidth="1.300"><path d="m1 4 4.500 4.500L13 1" /></svg>
            </Box>
            {name}
          </Option>
          {name === 'Data Labels' && <svg width="9" height="16" viewBox="0 0 9 16" fill="#333"><path d="m1 .5 7.500 7.500L1 15.500z" /></svg>}
        </OptionRow>
      ))}
    </Flyout>
  );
}

function FieldsPane() {
  return (
    <Pane>
      <PaneHead>
        <h1>PivotChart Fields</h1>
        <PaneIcon $w={62} aria-label="Pane options"><Triangle w={10} /></PaneIcon>
        <PaneIcon $w={20} aria-label="Close pane">
          <svg width="11" height="11" viewBox="0 0 11 11" stroke="#666" strokeWidth="1.800"><path d="m1 1 9 9M10 1l-9 9" /></svg>
        </PaneIcon>
      </PaneHead>
      <PaneRow>
        <span>to report:</span>
        <GearButton aria-label="Tools"><GearIcon /><Triangle w={8} /></GearButton>
      </PaneRow>
      <SearchBox><input type="text" aria-label="Search fields" /><SearchIcon /></SearchBox>
      <FieldList>
        <ul><li>R</li></ul>
        <ScrollRail>
          <ScrollArrow aria-label="Scroll up"><TriangleUp /></ScrollArrow>
          <ScrollThumb $h={36} />
          <ScrollGap />
          <ScrollArrow aria-label="Scroll down"><Triangle w={8} /></ScrollArrow>
        </ScrollRail>
      </FieldList>
      <DragHint>Drag fields between areas below:</DragHint>
      <Areas>
        <Area $left $top><h3><FunnelIcon />Filters</h3><DropZone /></Area>
        <Area $top><h3><ColsIcon />Legend (Series)</h3><DropZone /></Area>
        <Area $left><h3><RowsIcon />Axis (Categories)</h3><DropZone><FieldPill>ITEM</FieldPill></DropZone></Area>
        <Area><h3><SigmaIcon s={12} c="#777" w={1.6} />Values</h3><DropZone><FieldPill>Sum of TOTAL SALES</FieldPill></DropZone></Area>
      </Areas>
    </Pane>
  );
}

export default function App() {
  return (
    <Window>
      <GlobalStyle />
      <Ribbon>
        <TabBar>
          {TABS.map(t => (
            <Tab key={t.name} $w={t.w} $active={t.name === 'Home'} $context={CONTEXT_TABS.includes(t.name)}><span>{t.name}</span></Tab>
          ))}
          <TellMe><BulbIcon /><input type="text" aria-label="Tell me" placeholder="Tell me what you want to do" /></TellMe>
          <ShareButton><ShareIcon />Share</ShareButton>
        </TabBar>
        <RibbonGroups />
      </Ribbon>

      <FormulaBar>
        <BarBox $w={102}>
          <input type="text" aria-label="Name box" defaultValue="Chart 1" />
          <BarButton $w={20} aria-label="Names"><Triangle w={8} /></BarButton>
        </BarBox>
        <Grip><svg width="2" height="12" viewBox="0 0 2 12" fill="#a0a0a0"><path d="M0 0h2v2H0zM0 5h2v2H0zM0 10h2v2H0z" /></svg></Grip>
        <BarBox $w={110}>
          <BarButton $w={36} aria-label="Cancel"><svg width="11" height="11" viewBox="0 0 11 11" stroke="#bdbdbd" strokeWidth="1.600"><path d="m1 1 9 9M10 1l-9 9" /></svg></BarButton>
          <BarButton $w={36} aria-label="Enter"><svg width="13" height="11" viewBox="0 0 13 11" fill="none" stroke="#bdbdbd" strokeWidth="2.200"><path d="m1 6 3.500 3.500L12 1" /></svg></BarButton>
          <BarButton $w={36} aria-label="Insert function"><FxLabel>f<small>x</small></FxLabel></BarButton>
        </BarBox>
        <Spacer />
        <BarBox>
          <input type="text" aria-label="Formula" />
          <BarButton $w={17} aria-label="Expand formula bar"><Chevron c="#555" /></BarButton>
        </BarBox>
      </FormulaBar>

      <Workspace>
        <SheetArea>
          <Sheet />
          <Chart />
          <ChartTools>
            <ChartToolButton $on aria-label="Chart elements"><svg width="21" height="21" viewBox="0 0 21 21" stroke="#2c8a4b"><path d="M10.500 0v21M0 10.500h21" /></svg></ChartToolButton>
            <ChartToolButton aria-label="Chart styles"><ChartBrushIcon /></ChartToolButton>
          </ChartTools>
        </SheetArea>
        <ScrollRail $sheet>
          <ScrollArrow aria-label="Scroll up"><TriangleUp /></ScrollArrow>
          <ScrollThumb $h={382} />
        </ScrollRail>
        <FieldsPane />
        <ElementsFlyout />
      </Workspace>
    </Window>
  );
}
